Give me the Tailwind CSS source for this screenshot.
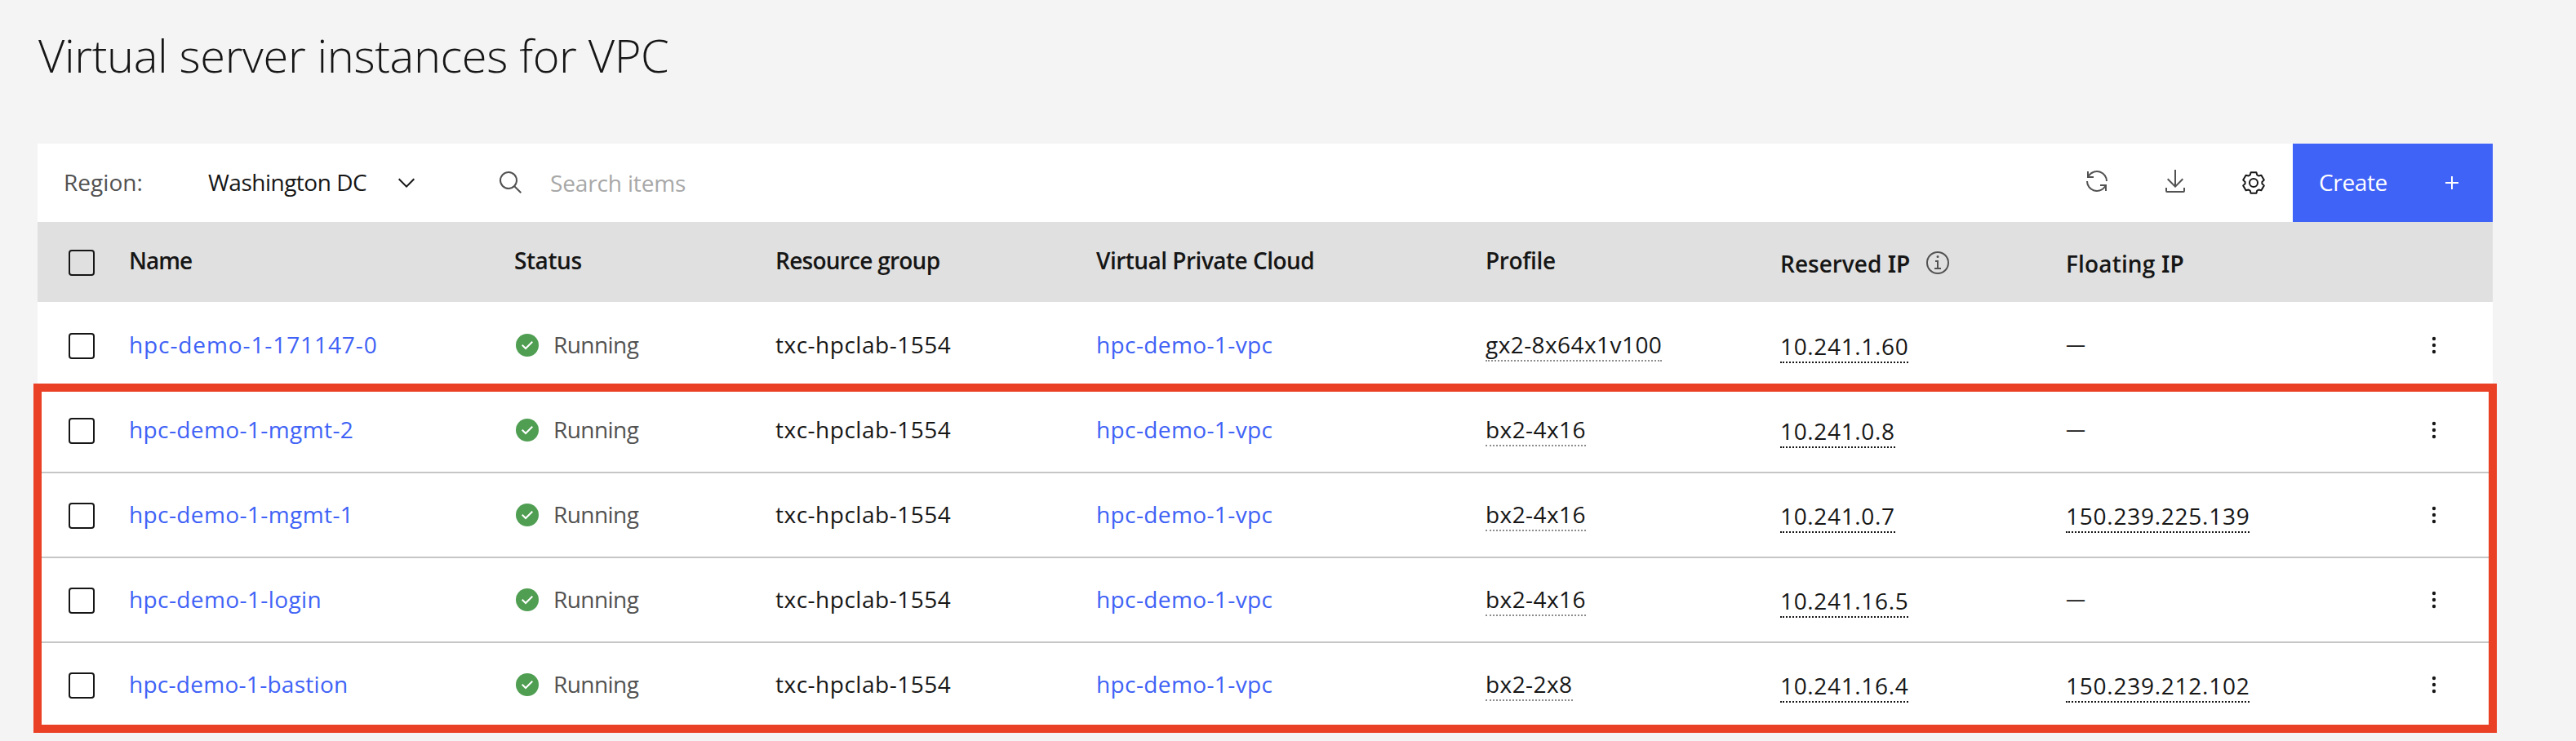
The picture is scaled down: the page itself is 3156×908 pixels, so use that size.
<!DOCTYPE html>
<html lang="en">
<head>
<meta charset="utf-8">
<title>Virtual server instances for VPC</title>
<script src="https://cdn.jsdelivr.net/npm/@tailwindcss/browser@4"></script>
</head>
<body class="relative h-[908px] w-[3156px] overflow-hidden bg-[#f4f4f4] font-['Open_Sans',sans-serif] text-[28px] leading-[38px] whitespace-nowrap text-[#161616]">
<svg class="hidden">
  <symbol id="check" viewBox="0 0 32 32"><circle cx="16" cy="16" r="14" fill="#4f9e52"/><path fill="#fff" d="M14 21.414l-5-5.001L10.413 15 14 18.586 21.585 11 23 12.415Z"/></symbol>
  <symbol id="menu" viewBox="0 0 32 32"><circle cx="16" cy="8" r="2.2"/><circle cx="16" cy="16" r="2.2"/><circle cx="16" cy="24" r="2.2"/></symbol>
</svg>

<h1 class="pt-[29px] pl-[47px] text-[56px] leading-[76px] font-light tracking-[-0.36px]">Virtual server instances for VPC</h1>

<main class="mt-[71px] ml-[46px] w-[3008px] bg-white">
  <div class="flex h-24 pl-8">
    <span class="w-[177px] pt-7 tracking-[0.05px] text-[#525252]">Region:</span>
    <span class="w-[227px] pt-7 tracking-[-0.5px]">Washington DC</span>
    <svg class="mt-8 mr-[96px] size-8" viewBox="0 0 16 16" fill="#161616"><path d="M8 11L3 6 3.7 5.3 8 9.6 12.3 5.3 13 6z"/></svg>
    <svg class="mt-8 mr-8 size-8" viewBox="0 0 32 32" fill="#525252"><path d="M29,27.5859l-7.5521-7.5521a11.0177,11.0177,0,1,0-1.4141,1.4141L27.5859,29ZM4,13a9,9,0,1,1,9,9A9.01,9.01,0,0,1,4,13Z"/></svg>
    <span class="flex-1 pt-[29px] tracking-[-0.15px] text-[#a8a8a8]">Search items</span>
    <svg class="mt-[30px] mr-16 size-8" viewBox="0 0 32 32" fill="#525252"><path d="M12,10H6.78A11,11,0,0,1,27,16h2A13,13,0,0,0,6,7.68V4H4v8h8Z M20,22h5.22A11,11,0,0,1,5,16H3a13,13,0,0,0,23,8.32V28h2V20H20Z"/></svg>
    <svg class="mt-[30px] mr-16 size-8" viewBox="0 0 32 32" fill="#525252"><path d="M26,24v4H6V24H4v4a2,2,0,0,0,2,2H26a2,2,0,0,0,2-2V24Z M26,14 24.59,12.59 17,20.17 17,2 15,2 15,20.17 7.41,12.59 6,14 16,24Z"/></svg>
    <svg class="mt-8 mr-8 size-8" viewBox="-16 -16 32 32" fill="none" stroke="#161616" stroke-width="2" stroke-linejoin="round"><circle r="5"/><path d="M-3.4-12.8H3.4L4.3-9.6 6.2-8.5 9.4-9.3 12.8-3.4 10.4-1.1V1.1L12.8 3.4 9.4 9.3 6.2 8.5 4.3 9.6 3.4 12.8H-3.4L-4.3 9.6-6.2 8.5-9.4 9.3-12.8 3.4-10.4 1.1V-1.1L-12.8-3.4-9.4-9.3-6.2-8.5-4.3-9.6Z"/></svg>
    <button class="flex w-[245px] bg-[#3f62f7] pl-8 text-white">
      <span class="w-[147px] pt-7 text-left tracking-[-0.35px]">Create</span>
      <svg class="mt-8 size-8" viewBox="0 0 32 32" fill="#fff"><path d="M17 15V8h-2v7H8v2h7v7h2v-7h7v-2z"/></svg>
    </button>
  </div>

  <div class="grid h-[98px] grid-cols-[112px_472px_320px_393px_477px_361px_350px_435px_1fr] bg-[#e0e0e0] pt-7 font-semibold">
    <span class="mt-1.5 ml-[38px] size-8 rounded border-2 border-[#161616]"></span>
    <span class="tracking-[-1px]">Name</span>
    <span class="tracking-[-0.43px]">Status</span>
    <span class="tracking-[-0.75px]">Resource group</span>
    <span class="tracking-[-0.52px]">Virtual Private Cloud</span>
    <span class="tracking-[-0.36px]">Profile</span>
    <span class="flex pt-1">
      <span class="w-[177px]">Reserved <span class="font-['Noto_Sans']">IP</span></span>
      <svg class="mt-0.5 size-8" viewBox="0 0 32 32" fill="#525252"><path d="M17 22V13H13v2h2v7H12v2h8V22ZM16 7a1.5 1.5 0 1 0 1.5 1.5A1.5 1.5 0 0 0 16 7Z"/><path d="M16 30A14 14 0 1 1 30 16 14 14 0 0 1 16 30ZM16 4A12 12 0 1 0 28 16 12 12 0 0 0 16 4Z"/></svg>
    </span>
    <span class="pt-1 tracking-[0.15px]">Floating <span class="font-['Noto_Sans']">IP</span></span>
  </div>
  <div id="rows" class="pt-0.5"></div>
</main>

<div class="absolute top-[470px] left-[41px] h-[428px] w-[3018px] border-[10px] border-[#ea4025]"></div>

<script>
const dotted = 'inline-block border-b-2 border-dotted border-[#161616]';
const rows = [
  ['hpc-demo-1-171147-0', 'tracking-[0.9px]', 'gx2-8x64x1v100', '10.241.1.60', ''],
  ['hpc-demo-1-mgmt-2', 'tracking-[0.4px]', 'bx2-4x16', '10.241.0.8', ''],
  ['hpc-demo-1-mgmt-1', 'tracking-[0.4px]', 'bx2-4x16', '10.241.0.7', '150.239.225.139'],
  ['hpc-demo-1-login', 'tracking-[0.4px]', 'bx2-4x16', '10.241.16.5', ''],
  ['hpc-demo-1-bastion', 'tracking-[0.28px]', 'bx2-2x8', '10.241.16.4', '150.239.212.102'],
];
document.getElementById('rows').innerHTML = rows.map(([name, track, profile, ip, floating], i) => `
  <div class="grid h-[104px] grid-cols-[112px_472px_320px_393px_477px_361px_350px_435px_1fr] border-b-2 pt-[31px] ${i === 0 ? 'border-white' : 'border-[#c6c6c6]'}">
    <span class="mt-[5px] ml-[38px] size-8 rounded border-2 border-[#161616]"></span>
    <a class="text-[#4062f6] ${track}">${name}</a>
    <span class="flex gap-4 tracking-[-0.56px] text-[#525252]"><svg class="mt-1 size-8"><use href="#check"/></svg>Running</span>
    <span class="tracking-[0.51px]">txc-hpclab-1554</span>
    <a class="tracking-[0.39px] text-[#4062f6]">hpc-demo-1-vpc</a>
    <span><span class="inline-block border-b-2 border-dotted border-[#8d8d8d] tracking-[0.43px]">${profile}</span></span>
    <span class="pt-0.5"><span class="${dotted} tracking-[0.65px]">${ip}</span></span>
    ${floating ? `<span class="pt-0.5"><span class="${dotted} tracking-[0.75px]">${floating}</span></span>` : '<span class="text-[24px] font-medium">—</span>'}
    <svg class="mt-1 size-8" fill="#161616"><use href="#menu"/></svg>
  </div>`).join('');
</script>
</body>
</html>
